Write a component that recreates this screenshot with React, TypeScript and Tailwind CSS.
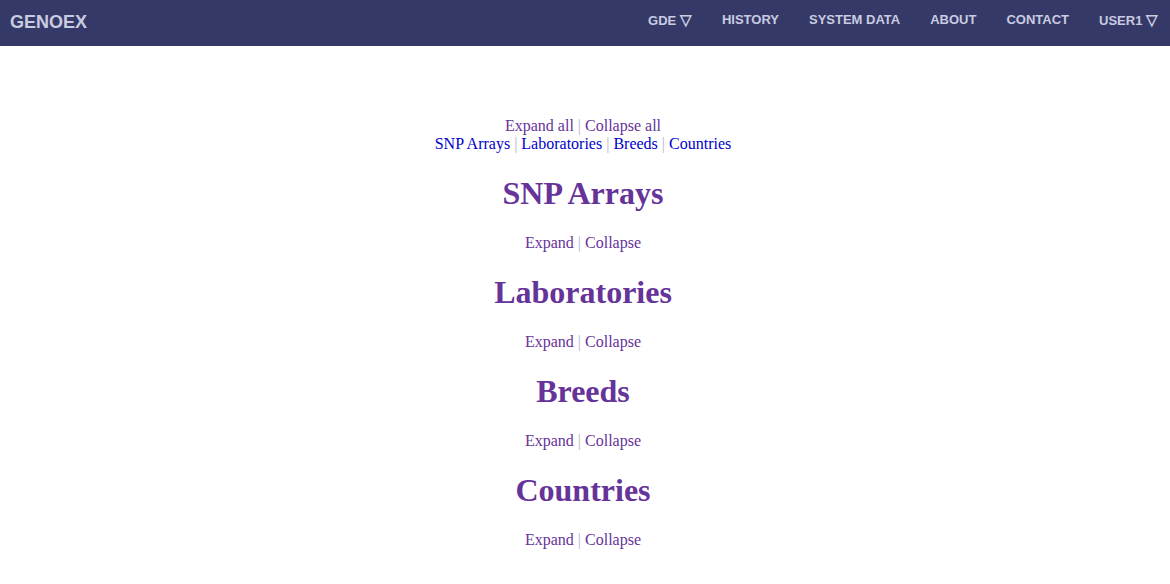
const sections = ["SNP Arrays", "Laboratories", "Breeds", "Countries"];

function Sep() {
  return <span className="text-[#b9b3d6]"> | </span>;
}

export default function App() {
  return (
    <div className="min-h-[584px] bg-white font-['Liberation_Serif',serif] text-[16px] leading-[18px]">
      {/* Navbar */}
      <nav className="flex h-[46px] items-center justify-between bg-[#353968] pl-[10px] pr-[12px] font-['Liberation_Sans',Arial,sans-serif] font-bold text-[#c9cbe0]">
        <span className="mt-[-2px] text-[18px]">GENOEX</span>
        <ul className="mt-[-6px] flex items-center gap-[30px] text-[13px]">
          <li>
            GDE <span className="text-[15px]">▽</span>
          </li>
          <li>HISTORY</li>
          <li>SYSTEM DATA</li>
          <li>ABOUT</li>
          <li>CONTACT</li>
          <li>
            USER1 <span className="text-[15px]">▽</span>
          </li>
        </ul>
      </nav>

      <main className="flex flex-col items-center pr-[4px] pt-[71px] text-center">
        <div className="text-[#663399]">
          Expand all
          <Sep />
          Collapse all
        </div>
        <div className="text-[#0000cc]">
          {sections.map((s, i) => (
            <span key={s}>
              {i > 0 && <Sep />}
              {s}
            </span>
          ))}
        </div>

        {sections.map((s) => (
          <section key={s} className="flex flex-col items-center">
            <h1 className="mt-[22px] text-[32px] leading-[37px] font-bold text-[#663399]">{s}</h1>
            <p className="mt-[22px] text-[#663399]">
              Expand
              <Sep />
              Collapse
            </p>
          </section>
        ))}
      </main>
    </div>
  );
}
